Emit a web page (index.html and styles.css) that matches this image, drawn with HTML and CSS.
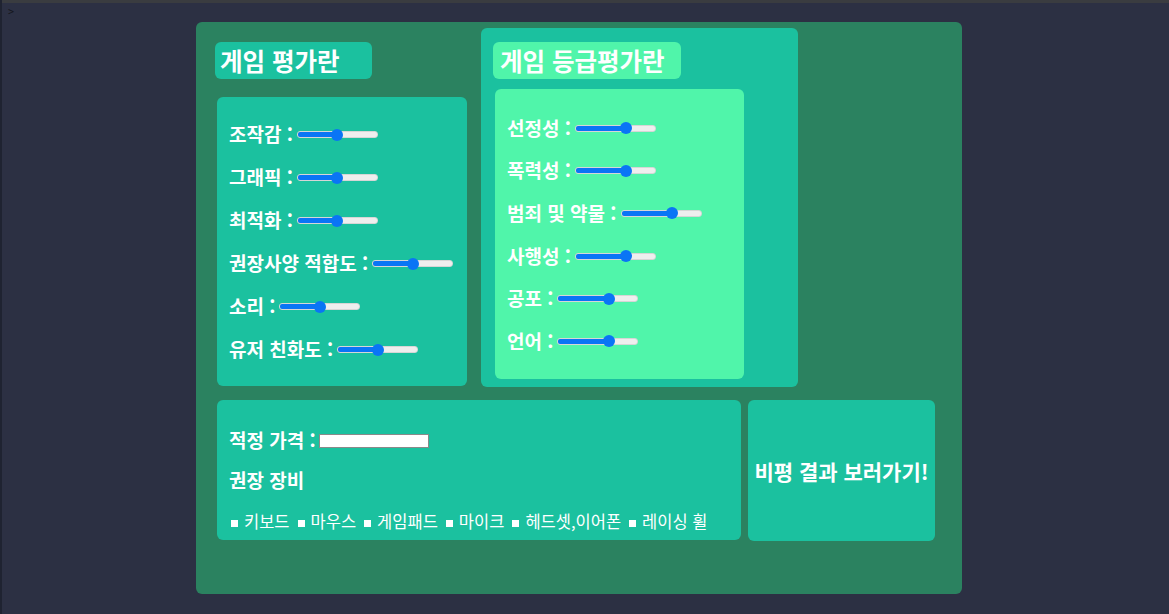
FILE: index.html
```html
<!DOCTYPE html>
<html lang="ko">
<head>
    <meta charset="UTF-8">
    <title>게임 비평</title>
    <link rel="stylesheet" href="styles.css">
</head>
<body>

<div class="topbar"><span class="prompt">&gt;</span></div>

<div class="wrap">
    <div class="top-row">
        <div class="eval-col">
            <h2 class="title">게임 평가란</h2>
            <div class="panel eval-panel">
                <div class="row"><label>조작감 : <input type="range" value="50" style="--v: 50%"></label></div>
                <div class="row"><label>그래픽 : <input type="range" value="50" style="--v: 50%"></label></div>
                <div class="row"><label>최적화 : <input type="range" value="50" style="--v: 50%"></label></div>
                <div class="row"><label>권장사양 적합도 : <input type="range" value="50" style="--v: 50%"></label></div>
                <div class="row"><label>소리 : <input type="range" value="50" style="--v: 50%"></label></div>
                <div class="row"><label>유저 친화도 : <input type="range" value="50" style="--v: 50%"></label></div>
            </div>
        </div>

        <div class="grade-box">
            <h2 class="title title-light">게임 등급평가란</h2>
            <div class="grade-panel">
                <div class="row"><label>선정성 : <input type="range" value="66" style="--v: 66%"></label></div>
                <div class="row"><label>폭력성 : <input type="range" value="66" style="--v: 66%"></label></div>
                <div class="row"><label>범죄 및 약물 : <input type="range" value="66" style="--v: 66%"></label></div>
                <div class="row"><label>사행성 : <input type="range" value="66" style="--v: 66%"></label></div>
                <div class="row"><label>공포 : <input type="range" value="66" style="--v: 66%"></label></div>
                <div class="row"><label>언어 : <input type="range" value="66" style="--v: 66%"></label></div>
            </div>
        </div>
    </div>

    <div class="bottom-row">
        <div class="panel extra-panel">
            <div class="price"><label>적정 가격 : <input type="text" class="price-input"></label></div>
            <h3 class="sub">권장 장비</h3>
            <ul class="gear">
                <li>키보드</li>
                <li>마우스</li>
                <li>게임패드</li>
                <li>마이크</li>
                <li>헤드셋,이어폰</li>
                <li>레이싱 휠</li>
            </ul>
        </div>
        <button type="button" class="panel go-btn">비평 결과 보러가기!</button>
    </div>
</div>

</body>
</html>
```

FILE: styles.css
```css
body {
    margin: 0;
    background-color: #2c3043;
    font-family: "Noto Sans CJK KR", "Noto Sans", sans-serif;
    color: #fff;
    height: 614px;
    overflow: hidden;
    border-left: 2px solid #1f2331;
}
.topbar {
    height: 3px;
    background: #3a3c40;
    position: relative;
}
.prompt {
    position: absolute;
    left: 6px;
    top: 6px;
    font-size: 10px;
    color: #14161d;
    font-family: "DejaVu Sans Mono", monospace;
}
.wrap {
    width: 766px;
    height: 572px;
    margin: 19px 0 0 194px;
    background-color: #2b8260;
    border-radius: 6px;
    box-sizing: border-box;
    padding-left: 19px;
}
.top-row {
    display: flex;
    align-items: flex-start;
}
.eval-col {
    width: 252px;
    padding-top: 20px;
}
.title {
    margin: 0;
    height: 37px;
    line-height: 37px;
    font-size: 24.5px;
    font-weight: bold;
    background-color: #1bc19f;
    border-radius: 6px;
    padding-left: 5px;
    width: 152px;
    white-space: nowrap;
}
.title-light {
    background-color: #50f5aa;
    width: 181px;
    padding-left: 7px;
}
.panel {
    background-color: #1bc19f;
    border-radius: 6px;
}
.eval-panel {
    margin: 18px 0 0 2px;
    width: 250px;
    height: 289px;
    box-sizing: border-box;
    padding: 15px 12px 0;
}
.row {
    height: 43px;
    display: flex;
    align-items: center;
    font-size: 19px;
    font-weight: bold;
    white-space: nowrap;
}
label {
    display: flex;
    align-items: center;
}
input[type="range"] {
    -webkit-appearance: none;
    appearance: none;
    width: 79px;
    height: 5px;
    margin: 2px 0 0 4px;
    border-radius: 3px;
    border: 1px solid #d6d6d6;
    background: linear-gradient(to right, #0a75f5 var(--v), #eeeeee var(--v));
}
input[type="range"]::-webkit-slider-thumb {
    -webkit-appearance: none;
    width: 12px;
    height: 12px;
    border-radius: 50%;
    background: #0a75f5;
    border: none;
}
.grade-box {
    margin: 6px 0 0 14px;
    width: 317px;
    height: 359px;
    background-color: #1bc19f;
    border-radius: 6px;
    box-sizing: border-box;
    padding: 14px 0 0 12px;
}
.grade-panel {
    margin: 10px 0 0 2px;
    width: 249px;
    height: 290px;
    background-color: #50f5aa;
    border-radius: 6px;
    box-sizing: border-box;
    padding: 17px 12px 0;
}
.grade-panel .row {
    height: 42.6px;
}
.bottom-row {
    display: flex;
    margin-top: 13px;
    padding-left: 2px;
}
.extra-panel {
    width: 524px;
    height: 140px;
    box-sizing: border-box;
    padding: 24px 12px 0;
}
.price {
    font-size: 19px;
    font-weight: bold;
    height: 30px;
    display: flex;
    align-items: center;
}
.price-input {
    width: 110px;
    height: 14px;
    box-sizing: border-box;
    margin: 4px 0 0 3px;
    padding: 0;
    border: 1px solid #8a8a8a;
    background: #fff;
}
.sub {
    margin: 0;
    height: 52px;
    line-height: 52px;
    font-size: 19px;
    font-weight: bold;
}
.gear {
    list-style: none;
    margin: 0;
    padding: 0 0 0 2px;
    display: flex;
    gap: 8px;
    font-size: 16.5px;
    line-height: 30px;
}
.gear li {
    display: flex;
    align-items: center;
}
.gear li::before {
    content: "";
    width: 7px;
    height: 7px;
    background: #fff;
    margin: 5px 6px 0 0;
}
.go-btn {
    margin-left: 7px;
    width: 187px;
    height: 141px;
    border: none;
    padding: 0;
    color: #fff;
    font-family: inherit;
    font-size: 21px;
    font-weight: bold;
    white-space: nowrap;
    cursor: pointer;
}
```
